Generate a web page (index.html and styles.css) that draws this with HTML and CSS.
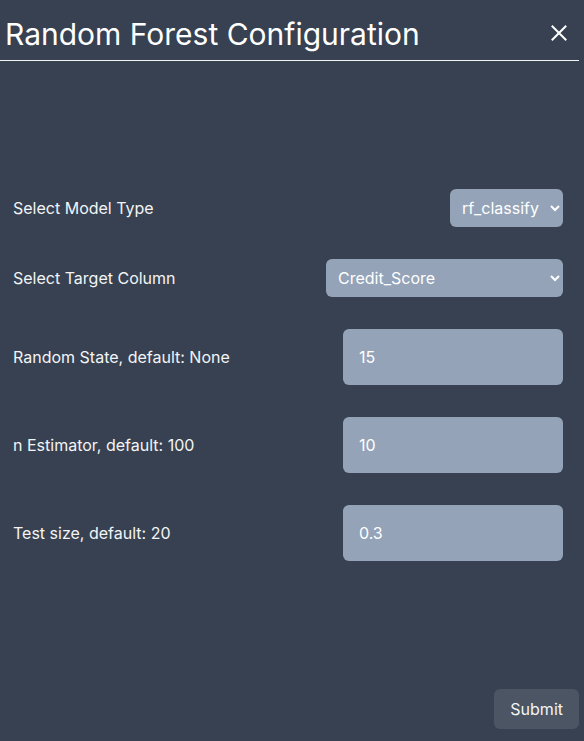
FILE: index.html
```html
<!DOCTYPE html>
<html>
<head>
<meta charset="utf-8">
<link rel="stylesheet" href="styles.css">
</head>
<body>
<div class="modal">
  <div class="header">
    <h1 class="title">Random Forest Configuration</h1>
    <span class="close" aria-label="Close"><svg width="16" height="16" viewBox="0 0 16 16"><path d="M1.5 1.5 L14.5 14.5 M14.5 1.5 L1.5 14.5" stroke="#ffffff" stroke-width="2" stroke-linecap="square" fill="none"/></svg></span>
  </div>
  <form class="form">
    <div class="row">
      <label class="label">Select Model Type</label>
      <select class="select select-model"><option>rf_classify</option></select>
    </div>
    <div class="row">
      <label class="label">Select Target Column</label>
      <select class="select select-target"><option>Credit_Score</option></select>
    </div>
    <div class="row">
      <label class="label">Random State, default: None</label>
      <input class="input" type="text" value="15">
    </div>
    <div class="row">
      <label class="label">n Estimator, default: 100</label>
      <input class="input" type="text" value="10">
    </div>
    <div class="row">
      <label class="label">Test size, default: 20</label>
      <input class="input" type="text" value="0.3">
    </div>
  </form>
  <div class="footer">
    <button class="submit" type="button">Submit</button>
  </div>
</div>
</body>
</html>
```
FILE: styles.css
```css
html, body {
  margin: 0;
  padding: 0;
  background: #374151;
  font-family: Inter, "Noto Sans", sans-serif;
  color: #ffffff;
}
.modal {
  height: 741px;
  display: flex;
  flex-direction: column;
  box-sizing: border-box;
}
.header {
  width: 579px;
  box-sizing: border-box;
  display: flex;
  align-items: center;
  justify-content: space-between;
  padding: 16px 12px 8px 5px;
  border-bottom: 1px solid #f3f4f6;
}
.title {
  margin: 0;
  font-size: 30px;
  font-weight: 400;
  line-height: 36px;
  color: #ffffff;
}
.close {
  display: flex;
  width: 16px;
  height: 16px;
  margin-top: -2px;
}
.form {
  margin-top: 128px;
  padding: 0 21px 0 13px;
  display: flex;
  flex-direction: column;
  gap: 32px;
}
.row {
  display: flex;
  align-items: center;
  justify-content: space-between;
}
.label {
  font-size: 16px;
  line-height: 24px;
  color: #f3f4f6;
}
.select {
  height: 38px;
  border: none;
  border-radius: 6px;
  background-color: #94a3b8;
  color: #ffffff;
  font-family: Inter, "Noto Sans", sans-serif;
  font-size: 16px;
  padding: 0 8px;
}
.select-model { width: 113px; }
.select-target { width: 237px; }
.input {
  width: 220px;
  height: 56px;
  box-sizing: border-box;
  border: none;
  border-radius: 6px;
  background: #94a3b8;
  color: #ffffff;
  font-family: Inter, "Noto Sans", sans-serif;
  font-size: 16px;
  padding: 0 16px;
  outline: none;
}
.footer {
  margin-top: auto;
  display: flex;
  justify-content: flex-end;
  padding: 0 5px 12px 0;
}
.submit {
  background: #4b5563;
  color: #f3f4f6;
  border: none;
  border-radius: 6px;
  font-family: Inter, "Noto Sans", sans-serif;
  font-size: 16px;
  line-height: 24px;
  padding: 8px 16px;
}
```
